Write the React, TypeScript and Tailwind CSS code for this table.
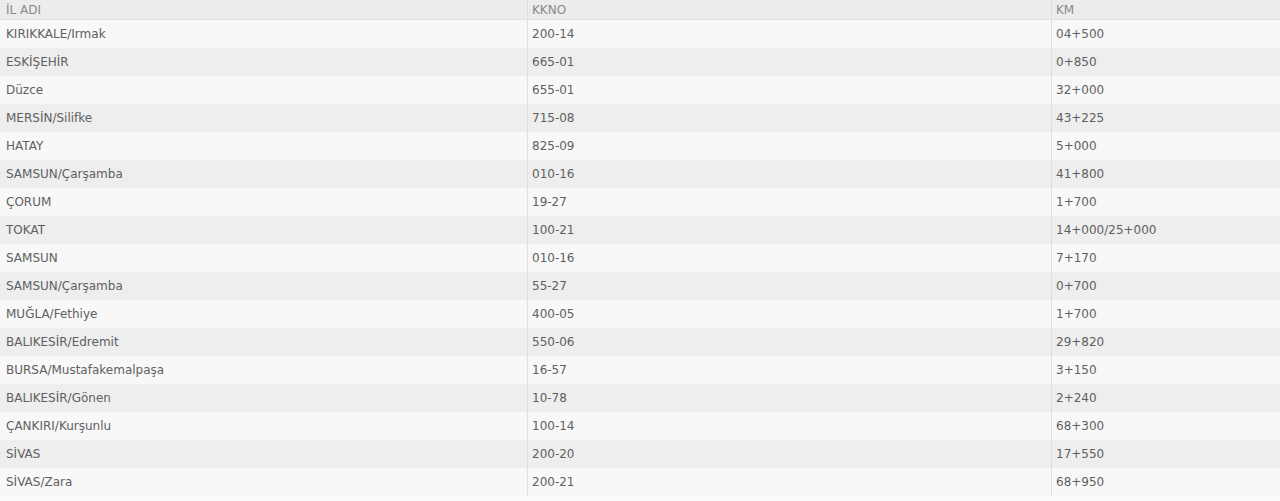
const rows: [string, string, string][] = [
  ['KIRIKKALE/Irmak', '200-14', '04+500'],
  ['ESKİŞEHİR', '665-01', '0+850'],
  ['Düzce', '655-01', '32+000'],
  ['MERSİN/Silifke', '715-08', '43+225'],
  ['HATAY', '825-09', '5+000'],
  ['SAMSUN/Çarşamba', '010-16', '41+800'],
  ['ÇORUM', '19-27', '1+700'],
  ['TOKAT', '100-21', '14+000/25+000'],
  ['SAMSUN', '010-16', '7+170'],
  ['SAMSUN/Çarşamba', '55-27', '0+700'],
  ['MUĞLA/Fethiye', '400-05', '1+700'],
  ['BALIKESİR/Edremit', '550-06', '29+820'],
  ['BURSA/Mustafakemalpaşa', '16-57', '3+150'],
  ['BALIKESİR/Gönen', '10-78', '2+240'],
  ['ÇANKIRI/Kurşunlu', '100-14', '68+300'],
  ['SİVAS', '200-20', '17+550'],
  ['SİVAS/Zara', '200-21', '68+950'],
];

const cols = 'grid grid-cols-[527px_524px_1fr]';

export default function App() {
  return (
    <div
      className="w-[1280px] h-[501px] bg-[#fcfcfc] overflow-hidden text-[12px] text-[#606060]"
      style={{ fontFamily: '"DejaVu Sans", Verdana, sans-serif' }}
    >
      <div className={`${cols} h-[20px] bg-[#ececec] border-b border-[#e2e2e2] text-[#8a8a8a]`}>
        <div className="pl-[6px] flex items-center">İL ADI</div>
        <div className="pl-[4px] flex items-center border-l border-[#dedede]">KKNO</div>
        <div className="pl-[4px] flex items-center border-l border-[#dedede]">KM</div>
      </div>
      {rows.map((r, i) => (
        <div
          key={i}
          className={`${cols} h-[28px] ${i % 2 === 0 ? 'bg-[#f8f8f8]' : 'bg-[#eeeeee]'}`}
        >
          <div className="pl-[6px] flex items-center">{r[0]}</div>
          <div className="pl-[4px] flex items-center border-l border-[#dedede]">{r[1]}</div>
          <div className="pl-[4px] flex items-center border-l border-[#dedede]">{r[2]}</div>
        </div>
      ))}
    </div>
  );
}
